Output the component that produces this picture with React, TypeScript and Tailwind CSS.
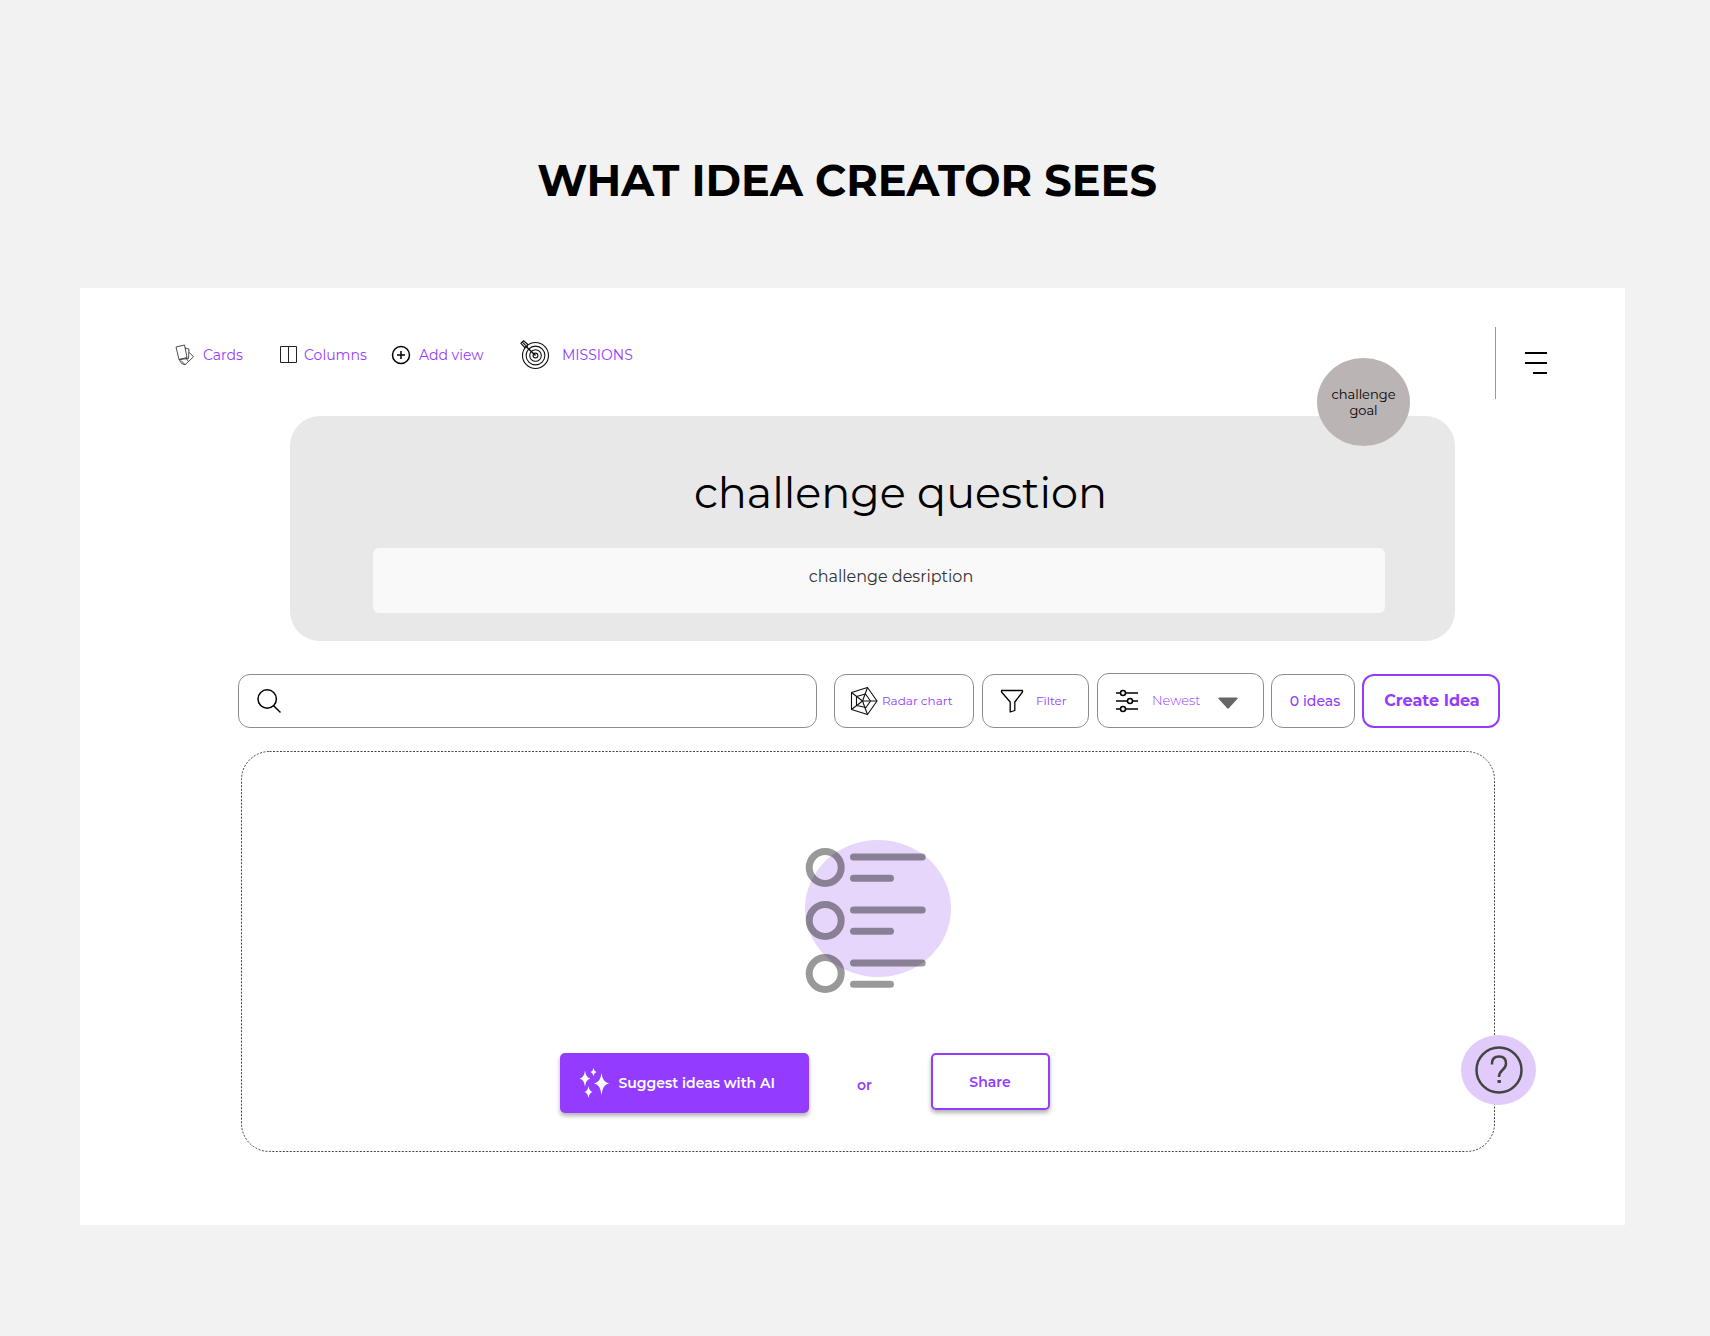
import { useState } from 'react';

const sortOptions = ['Newest', 'Oldest', 'Popular'];

function CardsIcon() {
  return (
    <svg viewBox="0 0 20 22" className="h-[22px] w-5" fill="none" stroke="#222" strokeWidth="0.8" strokeLinejoin="round">
      <path d="M1 3 9.500 1 12 13.500 4 15.500Z" />
      <path d="M10 4 14 5 13.500 14.500" />
      <path d="M14 8.200 18.500 12.800 10 20.800 6.500 19.500 4.200 15.500" />
      <path d="M4.600 15.500 13.500 14.500M6 16.500 10 20.600M11 13.800 13 17" />
    </svg>
  );
}

function ColumnsIcon() {
  return (
    <svg viewBox="0 0 18 18" className="h-[18px] w-[18px]" fill="none" stroke="#222" strokeWidth="1">
      <path d="M0.5 0.5h16v16h-16zM8.5 0.5v16" />
    </svg>
  );
}

function PlusIcon() {
  return (
    <svg viewBox="0 0 20 20" className="h-5 w-5" fill="none" stroke="#000" strokeWidth="1.5">
      <circle cx="10" cy="10" r="8.5" />
      <path d="M10 6v8M6 10h8" />
    </svg>
  );
}

function TargetIcon() {
  return (
    <svg viewBox="0 0 30 30" className="h-[30px] w-[30px]" fill="none" stroke="#111" strokeWidth="1.1">
      <circle cx="15.500" cy="15.500" r="13" />
      <circle cx="15.500" cy="15.500" r="9.4" />
      <circle cx="15.500" cy="15.500" r="5.8" />
      <circle cx="15.500" cy="15.500" r="2.4" />
      <path d="M5.500 6 15.500 15.500" strokeWidth="1.5" />
      <path d="M1 3.300 3.600 0.900 7.600 4.300 7 6.900 4.600 7.300ZM2.400 2.100 5.800 5.700" strokeWidth="1.2" />
    </svg>
  );
}

function SearchIcon() {
  return (
    <svg viewBox="0 0 24 24" className="h-6 w-6 shrink-0" fill="none" stroke="#000" strokeWidth="1.5" strokeLinecap="round">
      <circle cx="10.200" cy="10" r="9.2" />
      <path d="M16.600 16.800 23 23" />
    </svg>
  );
}

function RadarIcon() {
  return (
    <svg viewBox="0 0 28 30" className="h-[30px] w-7 shrink-0" fill="none" stroke="#111" strokeWidth="1.1" strokeLinejoin="round">
      <path d="M1.500 6.500 17.500 1.500 27 15 17.500 28.500 1.500 23.500Z" />
      <path d="M6.500 10.500 15.500 8 20.500 15 16 21.500 6.500 19.500Z" />
      <path d="M12.500 15 1.500 6.500M12.500 15 17.500 1.500M12.500 15H27M12.500 15 17.500 28.500M12.500 15 1.500 23.500" />
    </svg>
  );
}

function FilterIcon() {
  return (
    <svg viewBox="0 0 24 24" className="h-6 w-6 shrink-0" fill="none" stroke="#000" strokeWidth="1.3" strokeLinejoin="round">
      <path d="M1.500 1.500h21v1.500l-7.700 10v8.500l-4.600 1.500V13L1.500 3z" />
    </svg>
  );
}

function SlidersIcon() {
  return (
    <svg viewBox="0 0 24 24" className="h-6 w-6 shrink-0" fill="none" stroke="#000" strokeWidth="1.5">
      <path d="M1 4h4.500M10.500 4H23M1 12h11.500M17.500 12H23M1 20h4.500M10.500 20H23" />
      <circle cx="8" cy="4" r="2.500" />
      <circle cx="15" cy="12" r="2.500" />
      <circle cx="8" cy="20" r="2.500" />
    </svg>
  );
}

function SparklesIcon() {
  return (
    <svg viewBox="0 0 30 30" className="h-[30px] w-[30px] shrink-0" fill="#fff">
      <path d="M22.500 5Q23.500 14.500 30 15.500Q23.500 16.500 22.500 27Q21.500 16.500 15 15.500Q21.500 14.500 22.500 5Z" />
      <path d="M6 2.500Q6.800 9.500 11.500 10.500Q6.800 11.500 6 18.500Q5.200 11.500 0.500 10.500Q5.200 9.500 6 2.500Z" />
      <path d="M14.500 0Q15 3.200 17.500 4Q15 4.800 14.500 8Q14 4.800 11.500 4Q14 3.200 14.500 0Z" />
      <path d="M9.500 18Q10.200 23 13.500 24Q10.200 25 9.500 30Q8.800 25 5.500 24Q8.800 23 9.500 18Z" />
    </svg>
  );
}

function ListIllustration() {
  return (
    <svg viewBox="24 18 150 156" className="h-[156px] w-[150px]" fill="none">
      <ellipse cx="98" cy="88.5" rx="73" ry="68.5" fill="#e6d6fb" />
      <g stroke="#000" strokeOpacity="0.4" strokeWidth="7" strokeLinecap="round">
        {[0, 53, 106].map((y) => (
          <g key={y}>
            <circle cx="45.2" cy={47.5 + y} r="16" />
            <path d={`M73.500 ${37 + y}H142.200`} />
            <path d={`M73.500 ${58.3 + y}H110.500`} />
          </g>
        ))}
      </g>
    </svg>
  );
}

function Header() {
  const link = 'flex items-center text-sm text-[#933cff]';

  return (
    <header className="flex items-start justify-between pl-[95px] pr-[78px]">
      <nav className="flex h-14 items-center">
        <a href="#cards" className={`${link} w-[105px] gap-2`}>
          <CardsIcon />
          Cards
        </a>
        <a href="#columns" className={`${link} w-[111px] gap-1.5`}>
          <ColumnsIcon />
          Columns
        </a>
        <a href="#add-view" className={`${link} w-[129px] gap-2`}>
          <PlusIcon />
          Add view
        </a>
        <a href="#missions" className={`${link} gap-3`}>
          <TargetIcon />
          MISSIONS
        </a>
      </nav>
      <button type="button" aria-label="Menu" className="flex h-[72px] items-center border-l border-[#999] pl-[29px]">
        <span className="flex w-[22px] flex-col items-end gap-2">
          <span className="h-0.5 w-full bg-black" />
          <span className="h-0.5 w-full bg-black" />
          <span className="h-0.5 w-3.5 bg-black" />
        </span>
      </button>
    </header>
  );
}

function ChallengeBanner() {
  return (
    <section className="relative mt-[17px] ml-[210px] mr-[170px] rounded-[30px] bg-[#e8e8e8] px-[83px] pt-[49px] pb-7">
      <h2 className="pr-[14px] pl-[70px] text-center text-[43px] leading-[56px] font-normal text-black">
        challenge question
      </h2>
      <p className="mt-[27px] mr-[-13px] h-[65px] rounded-md bg-[#f9f9f9] pt-[17px] pl-6 text-center text-base leading-6 text-[#333]">
        challenge desription
      </p>
      <div className="absolute -top-[58px] right-[45px] flex h-[88px] w-[93px] items-center justify-center rounded-[50%] bg-[#bbb4b4] text-center text-[13px] leading-4 text-black">
        challenge
        <br />
        goal
      </div>
    </section>
  );
}

function Toolbar() {
  const [sort, setSort] = useState('Newest');
  const box = 'flex items-center rounded-xl border border-[#8c8c8c] bg-white text-[#933cff]';

  return (
    <div className="mt-8 ml-[158px] mr-[125px] flex items-center gap-[17px]">
      <label className={`${box} h-[54px] min-w-0 flex-1 pr-4 pl-[18px]`}>
        <SearchIcon />
        <input type="search" aria-label="Search ideas" className="ml-3 min-w-0 flex-1 text-sm outline-none" />
      </label>
      <div className="flex items-center gap-2">
        <button type="button" className={`${box} h-[54px] w-[140px] gap-1 pl-[15px] text-xs`}>
          <RadarIcon />
          Radar chart
        </button>
        <button type="button" className={`${box} h-[54px] w-[107px] gap-3 pl-[17px] text-xs`}>
          <FilterIcon />
          Filter
        </button>
        <label className={`${box} h-[55px] w-[167px] pl-[17px]`}>
          <SlidersIcon />
          <select
            aria-label="Sort ideas"
            value={sort}
            onChange={(e) => setSort(e.target.value)}
            className="ml-[13px] w-[66px] appearance-none bg-transparent text-[13px] font-light outline-none"
          >
            {sortOptions.map((option) => (
              <option key={option}>{option}</option>
            ))}
          </select>
          <svg viewBox="0 0 20 16" className="pointer-events-none h-4 w-5" fill="#666">
            <path d="M1 4.500h18q1 0.500 0.500 1.300L11 15q-1 1-2 0L0.500 5.800Q0 5 1 4.500z" />
          </svg>
        </label>
      </div>
      <div className="-ml-2.5 flex items-center gap-[7px]">
        <output className={`${box} h-[54px] w-[84px] justify-center pl-1 text-sm font-medium`}>0 ideas</output>
        <button
          type="button"
          className="h-[54px] w-[138px] rounded-xl border-2 border-[#933cff] bg-white pl-0.5 text-base font-bold text-[#933cff]"
        >
          Create Idea
        </button>
      </div>
    </div>
  );
}

function EmptyState() {
  return (
    <section className="relative mt-[23px] ml-[161px] mr-[131px] h-[400px] pt-[87px]">
      {/* Fine dotted outline, CSS dashes are too long for this */}
      <svg className="pointer-events-none absolute inset-0 h-full w-full overflow-visible" fill="none">
        <rect x="0.5" y="0.5" width="100%" height="100%" rx="28" stroke="#444" strokeDasharray="2 1.5" />
      </svg>
      <div className="flex justify-center pl-[22px]">
        <ListIllustration />
      </div>
      <div className="mt-[59px] flex items-start justify-center pr-[126px] text-sm font-semibold">
        <button
          type="button"
          className="flex h-[60px] w-[249px] items-center gap-[10px] rounded-[5px] bg-[#933cff] pl-[19px] text-white shadow-[0_3px_4px_rgba(0,0,0,0.3)]"
        >
          <SparklesIcon />
          Suggest ideas with AI
        </button>
        <span className="w-[122px] pr-2.5 text-center leading-[64px] text-[#933cff]">or</span>
        <button
          type="button"
          className="h-[57px] w-[119px] rounded-[5px] border-2 border-[#933cff] bg-white text-[#933cff] shadow-[0_3px_4px_rgba(0,0,0,0.3)]"
        >
          Share
        </button>
      </div>
      <button
        type="button"
        aria-label="Help"
        className="absolute -right-[42px] bottom-[46px] flex h-[70px] w-[75px] items-center justify-center rounded-[50%] bg-[#e0cbfa]"
      >
        <svg viewBox="0 0 48 48" className="h-12 w-12" fill="none" stroke="#444" strokeWidth="2.500">
          <circle cx="24" cy="24" r="22.500" />
          <path d="M17 18.500v-1q0-7 7-7t7 7q0 3.500-3.500 6.500T24 31" />
          <path d="M22.500 35.500h3.400" strokeWidth="3" />
        </svg>
      </button>
    </section>
  );
}

export default function App() {
  return (
    <main className="min-h-screen bg-[#f2f2f2] pt-[157px] pb-[111px] font-['Montserrat','Inter',sans-serif]">
      <h1 className="pr-4 text-center text-[43px] leading-[48px] font-bold text-black">WHAT IDEA CREATOR SEES</h1>
      <div className="mt-[83px] mr-[85px] ml-20 bg-white pt-[39px] pb-[74px]">
        <Header />
        <ChallengeBanner />
        <Toolbar />
        <EmptyState />
      </div>
    </main>
  );
}
